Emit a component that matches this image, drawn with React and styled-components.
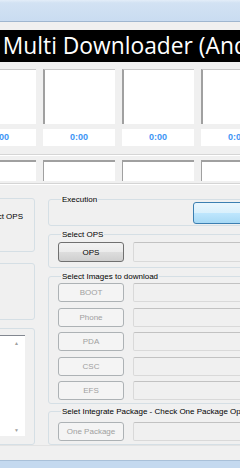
import React from 'react'
import styled, { createGlobalStyle } from 'styled-components'

const GlobalStyle = createGlobalStyle`
  html, body {
    margin: 0;
    padding: 0;
    background: #f0f0f0;
    overflow: hidden;
  }
  #root {
    width: 240px;
    height: 468px;
    overflow: hidden;
  }
`

const columns = [0, 1, 2, 3]
const images = ['BOOT', 'Phone', 'PDA', 'CSC', 'EFS']

const App = () => {
  return (
    <>
      <GlobalStyle />
      <Window>
        <TopFrame />
        <Client>
          <Banner>s Multi Downloader (Android)</Banner>
          <Row $top={7}>
            {columns.map(i => <Monitor key={i} />)}
          </Row>
          <Row $top={5}>
            {columns.map(i => <Time key={i}>0:00</Time>)}
          </Row>
          <Divider $top={8} />
          <Row $top={4}>
            {columns.map(i => <Slot key={i} />)}
          </Row>
          <Divider $top={2} />
          <Main>
            <LeftCol>
              <Panel $h={54} $top={4}>
                <PanelText>Select OPS</PanelText>
              </Panel>
              <Panel $h={57} $top={11} />
              <Panel $h={117} $top={8}>
                <ListBox>
                  <Scroll>
                    <Arrow>▲</Arrow>
                    <Arrow>▼</Arrow>
                  </Scroll>
                </ListBox>
              </Panel>
            </LeftCol>
            <RightCol>
              <Group>
                <Legend>Execution</Legend>
                <StartButton />
              </Group>
              <Group $top={3} $pb={5}>
                <Legend>Select OPS</Legend>
                <Line $top={2}>
                  <Button>OPS</Button>
                  <Field />
                </Line>
              </Group>
              <Group $top={3} $pb={3}>
                <Legend>Select Images to download</Legend>
                <Stack>
                  {images.map(name => (
                    <Line key={name}>
                      <Button $disabled>{name}</Button>
                      <Field />
                    </Line>
                  ))}
                </Stack>
              </Group>
              <Group $top={2} $pb={3}>
                <Legend>Selet Integrate Package - Check One Package Option</Legend>
                <Line $top={5}>
                  <Button $disabled>One Package</Button>
                  <Field />
                </Line>
              </Group>
            </RightCol>
          </Main>
          <Footer />
        </Client>
        <BottomFrame />
      </Window>
    </>
  )
}

export default App

const Window = styled.div`
display: flex;
flex-direction: column;
width: 240px;
height: 468px;
font-family: "Liberation Sans", Arial, sans-serif;
`
const TopFrame = styled.div`
height: 21px;
flex-shrink: 0;
background: linear-gradient(#e3edf8 0px, #d2e2f3 3px, #c9dcf1 21px);
border-bottom: 1px solid #9fb6cf;
`
const BottomFrame = styled.div`
flex: 1;
background: #c4d9ef;
border-top: 1px solid #a9c0d8;
`
const Client = styled.div`
display: flex;
flex-direction: column;
background: #f0f0f0;
`
const Banner = styled.div`
margin-top: 8px;
height: 32px;
background: #000;
color: #fff;
font-family: "Open Sans", sans-serif;
font-size: 22.8px;
line-height: 32px;
white-space: nowrap;
overflow: hidden;
text-indent: -14px;
`
const Row = styled.div`
display: flex;
gap: 7px;
margin-left: -36px;
margin-top: ${p => p.$top}px;
`
const Monitor = styled.div`
flex: 0 0 72px;
height: 55px;
box-sizing: border-box;
background: #fff;
border-left: 2px solid #a0a0a0;
border-top: 1px solid #c8c8c8;
`
const Time = styled.div`
flex: 0 0 72px;
height: 17px;
background: #fff;
color: #3d95f5;
font-size: 9px;
font-weight: bold;
line-height: 17px;
text-align: center;
`
const Slot = styled.div`
flex: 0 0 72px;
height: 21px;
box-sizing: border-box;
background: #fff;
border-left: 1px solid #a0a0a0;
border-top: 2px solid #a0a0a0;
`
const Divider = styled.div`
margin-top: ${p => p.$top}px;
height: 1px;
background: #d5d5d5;
border-bottom: 1px solid #fff;
`
const Main = styled.div`
display: flex;
margin-top: 9px;
height: 251px;
`
const LeftCol = styled.div`
display: flex;
flex-direction: column;
flex: 0 0 95px;
margin-left: -60px;
`
const Panel = styled.div`
box-sizing: border-box;
height: ${p => p.$h}px;
margin-top: ${p => p.$top}px;
border: 1px solid #d5dfe5;
border-radius: 3px;
display: flex;
flex-direction: column;
`
const PanelText = styled.div`
margin-top: 13px;
padding-right: 11px;
text-align: right;
font-size: 8px;
color: #000;
`
const ListBox = styled.div`
margin: 6px 9px 0 0;
height: 101px;
box-sizing: border-box;
background: #fff;
border-top: 1px solid #828790;
display: flex;
justify-content: flex-end;
`
const Scroll = styled.div`
width: 17px;
display: flex;
flex-direction: column;
justify-content: space-between;
align-items: center;
padding: 4px 0 3px;
`
const Arrow = styled.span`
font-size: 5px;
line-height: 6px;
color: #a0a0a0;
`
const RightCol = styled.div`
display: flex;
flex-direction: column;
margin-left: 13px;
width: 260px;
flex-shrink: 0;
`
const Group = styled.fieldset`
margin: ${p => p.$top || 0}px 0 0 0;
padding: 0 0 ${p => p.$pb || 1}px 9px;
min-width: 0;
border: 1px solid #d5dfe5;
border-radius: 3px;
`
const Legend = styled.legend`
margin-left: 3px;
padding: 0 1px;
font-size: 8px;
line-height: 11px;
color: #000;
white-space: nowrap;
`
const StartButton = styled.div`
margin: -3px 0 0 135px;
height: 22px;
box-sizing: border-box;
border: 1px solid #3c7fb1;
border-radius: 3px;
background: linear-gradient(#eaf6fd 0%, #d9f0fc 50%, #bee6fd 51%, #a7d9f5 100%);
`
const Stack = styled.div`
display: flex;
flex-direction: column;
gap: 5.5px;
margin-top: 1px;
`
const Line = styled.div`
display: flex;
gap: 9px;
margin-top: ${p => p.$top || 0}px;
`
const Button = styled.div`
flex: 0 0 66px;
height: ${p => (p.$disabled ? 19 : 20)}px;
box-sizing: border-box;
border: 1px solid ${p => (p.$disabled ? '#adb2b5' : '#707070')};
border-radius: 3px;
background: ${p => (p.$disabled ? '#f4f4f4' : 'linear-gradient(#f2f2f2 0%, #ebebeb 50%, #dddddd 51%, #cfcfcf 100%)')};
color: ${p => (p.$disabled ? '#a0a0a0' : '#000')};
font-size: 8px;
display: flex;
align-items: center;
justify-content: center;
`
const Field = styled.div`
flex: 1;
box-sizing: border-box;
border: 1px solid #d9d9d9;
border-top-color: #c2c2c2;
border-radius: 2px;
background: #f0f0f0;
`
const Footer = styled.div`
height: 14px;
border-top: 1px solid #e3e3e3;
margin-top: 0;
`
